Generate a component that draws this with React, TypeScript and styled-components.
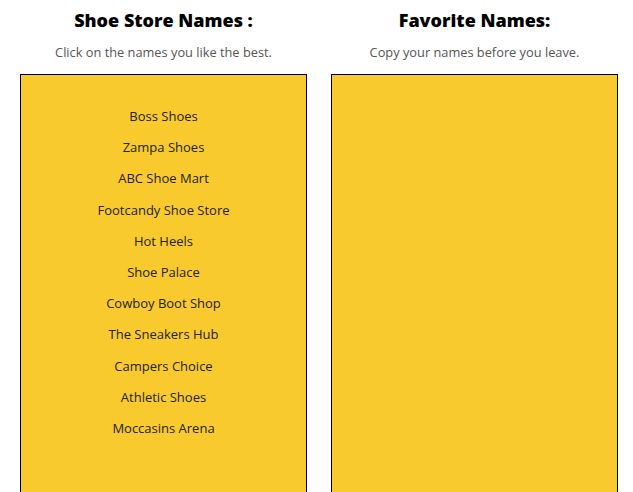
import React from 'react';
import styled, { createGlobalStyle } from 'styled-components';

const GlobalStyle = createGlobalStyle`
  html, body {
    margin: 0;
    padding: 0;
    background: #ffffff;
    overflow: hidden;
  }
  body {
    font-family: "Open Sans", "Noto Sans", sans-serif;
  }
`;

const Page = styled.div`
  display: grid;
  grid-template-columns: 287px 287px;
  column-gap: 24px;
  padding-left: 20px;
`;

const Column = styled.section`
  display: flex;
  flex-direction: column;
  align-items: center;
`;

const Title = styled.h2`
  margin: 8px 0 0;
  font-family: "Open Sans", sans-serif;
  font-weight: 800;
  font-size: 18px;
  line-height: 24px;
  color: #000;
`;

const Subtitle = styled.p`
  margin: 11px 0 0;
  font-size: 12.8px;
  line-height: 18px;
  color: #555;
`;

const Box = styled.div`
  box-sizing: border-box;
  margin-top: 13px;
  width: 287px;
  height: 440px;
  background: #f9ca2e;
  border: 1px solid #000;
  padding-top: 32px;
  display: flex;
  flex-direction: column;
  align-items: center;
`;

const Name = styled.div`
  font-size: 13px;
  line-height: 18px;
  height: 31.2px;
  color: #222;
  cursor: pointer;
`;

const names = [
  'Boss Shoes',
  'Zampa Shoes',
  'ABC Shoe Mart',
  'Footcandy Shoe Store',
  'Hot Heels',
  'Shoe Palace',
  'Cowboy Boot Shop',
  'The Sneakers Hub',
  'Campers Choice',
  'Athletic Shoes',
  'Moccasins Arena',
];

export default function App() {
  return (
    <>
      <GlobalStyle />
      <Page>
        <Column>
          <Title>Shoe Store Names :</Title>
          <Subtitle>Click on the names you like the best.</Subtitle>
          <Box>
            {names.map((n) => (
              <Name key={n}>{n}</Name>
            ))}
          </Box>
        </Column>
        <Column>
          <Title>Favorite Names:</Title>
          <Subtitle>Copy your names before you leave.</Subtitle>
          <Box />
        </Column>
      </Page>
    </>
  );
}
